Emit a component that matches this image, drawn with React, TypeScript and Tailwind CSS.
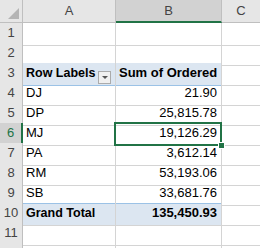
const rows: { label: string; value: string; kind?: 'head' | 'total' }[] = [
  { label: '', value: '' },
  { label: '', value: '' },
  { label: 'Row Labels', value: 'Sum of Ordered', kind: 'head' },
  { label: 'DJ', value: '21.90' },
  { label: 'DP', value: '25,815.78' },
  { label: 'MJ', value: '19,126.29' },
  { label: 'PA', value: '3,612.14' },
  { label: 'RM', value: '53,193.06' },
  { label: 'SB', value: '33,681.76' },
  { label: 'Grand Total', value: '135,450.93', kind: 'total' },
  { label: '', value: '' },
  { label: '', value: '' },
];

const SELECTED_ROW = 6;

const App = () => {
  return (
    <div
      className="w-[260px] h-[248px] overflow-hidden bg-white text-[13px] text-black"
      style={{ fontFamily: '"Liberation Sans", Arial, sans-serif' }}
    >
      {/* Column headers */}
      <div className="grid grid-cols-[23px_93px_106px_1fr] h-[23px]">
        <div className="relative bg-[#e6e6e6] border-r border-b border-[#bfbfbf]">
          <div className="absolute right-[3px] bottom-[3px] w-0 h-0 border-l-[11px] border-l-transparent border-b-[11px] border-b-[#b4b4b4]" />
        </div>
        <div className="flex items-center justify-center bg-[#e6e6e6] border-r border-b border-[#bfbfbf] text-[#444]">A</div>
        <div className="flex items-center justify-center bg-[#d2d2d2] border-r border-[#bfbfbf] border-b-2 border-b-[#217346] text-[#444]">B</div>
        <div className="flex items-center justify-center bg-[#e6e6e6] border-b border-[#bfbfbf] text-[#444]">C</div>
      </div>

      {rows.map((r, i) => {
        const n = i + 1;
        const selected = n === SELECTED_ROW;
        const band = r.kind === 'head' || r.kind === 'total';
        return (
          <div key={n} className="grid grid-cols-[23px_93px_106px_1fr] h-[20px]">
            <div
              className={
                selected
                  ? 'flex items-end justify-center pb-[2px] bg-[#d2d2d2] border-b border-[#bfbfbf] border-r-2 border-r-[#217346] text-[#217346]'
                  : 'flex items-end justify-center pb-[2px] bg-[#e6e6e6] border-r border-b border-[#bfbfbf] text-[#444]'
              }
            >
              {n < 12 ? n : ''}
            </div>
            <div
              className={`flex items-end pl-[3px] pb-[2px] whitespace-nowrap border-r border-b ${
                band ? 'bg-[#dce6f1] font-bold text-[12.5px] border-[#d4d4d4]' : 'border-[#d4d4d4]'
              } ${r.kind === 'head' ? 'border-b-[#9bc2e6]' : ''} ${
                r.kind === 'total' ? 'shadow-[inset_0_1px_0_#9bc2e6]' : ''
              }`}
            >
              <span>{r.label}</span>
              {r.kind === 'head' && (
                <span className="ml-auto mr-[4px] mb-[-1px] flex items-center justify-center w-[13px] h-[13px] bg-[#f0f0f0] border border-[#ababab]">
                  <span className="w-0 h-0 border-l-[3px] border-r-[3px] border-t-[3px] border-l-transparent border-r-transparent border-t-[#555]" />
                </span>
              )}
            </div>
            <div
              className={`relative flex items-end justify-end pr-[4px] pb-[2px] whitespace-nowrap border-r border-b border-[#d4d4d4] ${
                band ? 'bg-[#dce6f1] font-bold' : ''
              } ${r.kind === 'head' ? 'border-b-[#9bc2e6] justify-start pl-[3px]' : ''} ${
                r.kind === 'total' ? 'shadow-[inset_0_1px_0_#9bc2e6]' : ''
              }`}
            >
              {r.value}
              {selected && (
                <>
                  <div className="absolute z-10 -left-[2px] -top-[1px] -right-[1px] -bottom-[1px] border-2 border-[#217346]" />
                  <div className="absolute z-20 -right-[4px] -bottom-[4px] w-[7px] h-[7px] bg-[#217346] border border-white" />
                </>
              )}
            </div>
            <div className="border-b border-[#d4d4d4]" />
          </div>
        );
      })}
    </div>
  );
};

export default App;
